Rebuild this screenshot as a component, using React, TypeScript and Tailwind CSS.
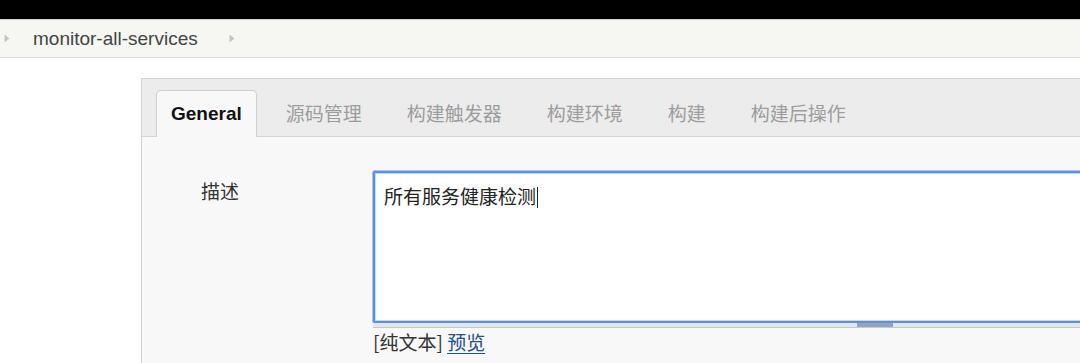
const tabs = ["源码管理", "构建触发器", "构建环境", "构建", "构建后操作"];

const font = "font-['Liberation_Sans','Noto_Sans_CJK_SC',sans-serif]";

function Arrow() {
  return (
    <svg width="6" height="9" viewBox="0 0 6 9" className="shrink-0">
      <path d="M0.5 0.5 L5.5 4.5 L0.5 8.5 Z" fill="#c4c4c4" />
    </svg>
  );
}

export default function App() {
  return (
    <div className={`w-[1080px] h-[363px] overflow-hidden bg-white ${font}`}>
      {/* top black bar */}
      <div className="h-[19px] bg-black" />

      {/* breadcrumb */}
      <div className="flex h-[39px] items-center border-t border-b border-t-[#d0d0cc] border-b-[#dcdcda] bg-[#f6f7f2] pl-[4px]">
        <Arrow />
        <span className="ml-[23px] text-[19px] leading-[24px] text-[#444]">monitor-all-services</span>
        <span className="ml-[31px]">
          <Arrow />
        </span>
      </div>

      {/* panel */}
      <div className="pl-[141px] pt-[20px]">
        <div className="w-[1000px] border-l border-t border-[#d3d3d3] bg-[#f8f8f8]">
          {/* tab strip */}
          <div className="flex h-[58px] items-end border-b border-[#d4d4d4] bg-[#ececec] pl-[14px]">
            <div className="-mb-px flex h-[47px] items-center rounded-t-[5px] border border-b-0 border-[#cfcfcf] bg-[#f8f8f8] px-[14px]">
              <span className="text-[19px] font-bold leading-[24px] text-[#111]">General</span>
            </div>
            <div className="flex h-[47px] items-center gap-[15px] pl-[14px]">
              {tabs.map((t) => (
                <span
                  key={t}
                  className="px-[15px] font-['Noto_Sans_CJK_SC',sans-serif] text-[19px] leading-[24px] text-[#9c9c9c]"
                >
                  {t}
                </span>
              ))}
            </div>
          </div>

          {/* description row */}
          <div className="flex pt-[34px] pl-[59px] pb-[10px]">
            <div className="w-[172px] pt-[8px] font-['Noto_Sans_CJK_SC',sans-serif] text-[19px] leading-[24px] text-[#333]">
              描述
            </div>
            <div className="flex-1">
              <div className="h-[152px] rounded-[2px] border-[2px] border-[#5590ec] bg-white px-[9px] pt-[10px] shadow-[0_0_0_1px_#a5c4f4,inset_0_0_0_1px_#c4d9f8]">
                <span className="font-['Noto_Sans_CJK_SC',sans-serif] text-[19px] leading-[24px] text-[#222]">
                  所有服务健康检测
                </span>
                <span className="ml-[1px] inline-block h-[21px] w-px translate-y-[4px] bg-[#222]" />
              </div>
              <div className="relative h-[5px] border-b border-[#c8c8c8] bg-[#e6e6e6]">
                <div className="absolute left-[484px] top-0 h-[4px] w-[36px] bg-[#9aa3b0]" />
              </div>
              <div className="pt-[2px] font-['Noto_Sans_CJK_SC',sans-serif] text-[19px] leading-[24px] text-[#333]">
                [纯文本]{" "}
                <a href="#" className="text-[#1f4f8e] underline underline-offset-[3px]">
                  预览
                </a>
              </div>
            </div>
          </div>
        </div>
      </div>
    </div>
  );
}
